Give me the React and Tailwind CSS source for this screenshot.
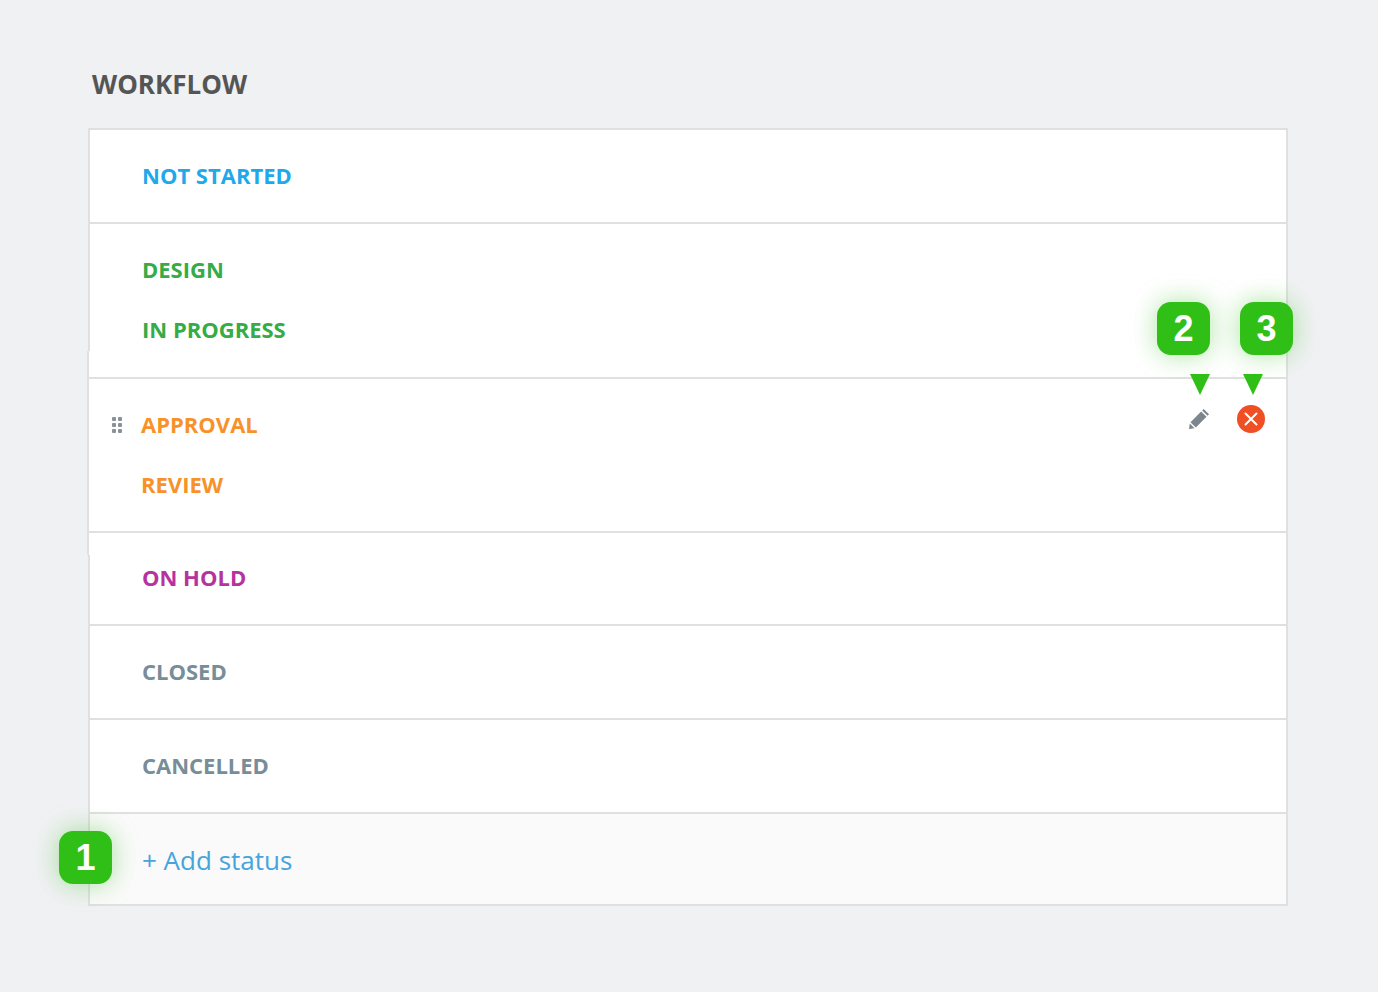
const FONT = 'font-["Open_Sans",sans-serif]'

function Label({ color, className = '', children }) {
  return <span className={`text-[22px] font-bold leading-none ${color} ${className}`}>{children}</span>
}

function Row({ color, children }) {
  return (
    <div className="flex h-[94px] items-center border-b-2 border-[#e0e0e0] pb-[2px] pl-[52px]">
      <Label color={color}>{children}</Label>
    </div>
  )
}

function Callout({ className, children }) {
  return (
    <div
      className={`absolute flex h-[53px] w-[53px] items-center justify-center rounded-[14px] bg-[#2fbf17] font-["Liberation_Sans",sans-serif] text-[36px] font-bold text-white shadow-[0_0_26px_rgba(47,191,23,0.4)] ${className}`}
    >
      {children}
    </div>
  )
}

function Arrow({ className }) {
  return (
    <svg className={`absolute ${className}`} width="20" height="21" viewBox="0 0 20 21">
      <polygon points="0,0 20,0 10,21" fill="#2fbf17" />
    </svg>
  )
}

function Grip() {
  return (
    <div className="mt-[2px] grid w-[10px] grid-cols-2 gap-x-[2px] gap-y-[2px]">
      {[0, 1, 2, 3, 4, 5].map((i) => (
        <span key={i} className="h-[4px] w-[4px] rounded-[1px] bg-[#87929a]" />
      ))}
    </div>
  )
}

export default function App() {
  return (
    <div className={`relative min-h-[992px] bg-[#f0f1f3] pl-[88px] pt-[66px] ${FONT}`}>
      <h1 className="h-[62px] pl-1 pt-[1px] text-[26px] font-bold leading-[34px] text-[#555555]">WORKFLOW</h1>

      <div className="w-[1200px]">
        <div className="border-x-2 border-t-2 border-[#e0e0e0] bg-white">
          <Row color="text-[#1fa9ea]">NOT STARTED</Row>
          <div className="h-[127px] pl-[52px] pt-4">
            <div className="flex h-[60px] items-center pb-[2px]">
              <Label color="text-[#35ac45]">DESIGN</Label>
            </div>
            <div className="flex h-[60px] items-center pb-[2px]">
              <Label color="text-[#35ac45]">IN PROGRESS</Label>
            </div>
          </div>
        </div>

        {/* row being dragged sits 1px to the left */}
        <div className="-ml-px border-x-2 border-[#e0e0e0] bg-white pt-[26px]">
          <div className="h-[156px] border-y-2 border-[#e0e0e0] pt-4">
            <div className="flex h-[60px] items-center pb-[2px] pl-[23px] pr-[21px]">
              <Grip />
              <Label color="text-[#f7922a]" className="ml-[19px]">APPROVAL</Label>
              <div className="mb-[10px] ml-auto flex items-center gap-[28px]">
                <svg width="20" height="20" viewBox="0 0 20 20" fill="#7d868c">
                  <polygon points="1.5,13.2 12.2,2.5 17.5,7.8 6.8,18.5" />
                  <polygon points="0.8,14.5 5.5,19.2 0,20" />
                  <polygon points="13.2,1.5 14.7,0 20,5.3 18.5,6.8" />
                </svg>
                <div className="flex h-[28px] w-[28px] items-center justify-center rounded-full bg-[#f04e23]">
                  <svg width="16" height="16" viewBox="0 0 16 16" stroke="white" strokeWidth="2" strokeLinecap="round">
                    <path d="M2.5 2.5l11 11M13.5 2.5l-11 11" />
                  </svg>
                </div>
              </div>
            </div>
            <div className="flex h-[60px] items-center pb-[2px] pl-[52px]">
              <Label color="text-[#f7922a]">REVIEW</Label>
            </div>
          </div>
          <div className="h-[22px]" />
        </div>

        <div className="border-x-2 border-b-2 border-[#e0e0e0] bg-white">
          <div className="border-b-2 border-[#e0e0e0] pb-[23px] pl-[52px]">
            <div className="flex h-[46px] items-center pb-[2px]">
              <Label color="text-[#b5339f]">ON HOLD</Label>
            </div>
          </div>
          <Row color="text-[#778d98]">CLOSED</Row>
          <Row color="text-[#778d98]">CANCELLED</Row>
          <div className="flex h-[90px] items-center bg-[#fafafa] pl-[52px] pt-[2px]">
            <span className="text-[26px] leading-none text-[#46a4dc]">+ Add status</span>
          </div>
        </div>
      </div>

      <Callout className="left-[1157px] top-[302px]">2</Callout>
      <Callout className="left-[1240px] top-[302px]">3</Callout>
      <Callout className="left-[59px] top-[831px]">1</Callout>
      <Arrow className="left-[1190px] top-[374px]" />
      <Arrow className="left-[1243px] top-[374px]" />
    </div>
  )
}
